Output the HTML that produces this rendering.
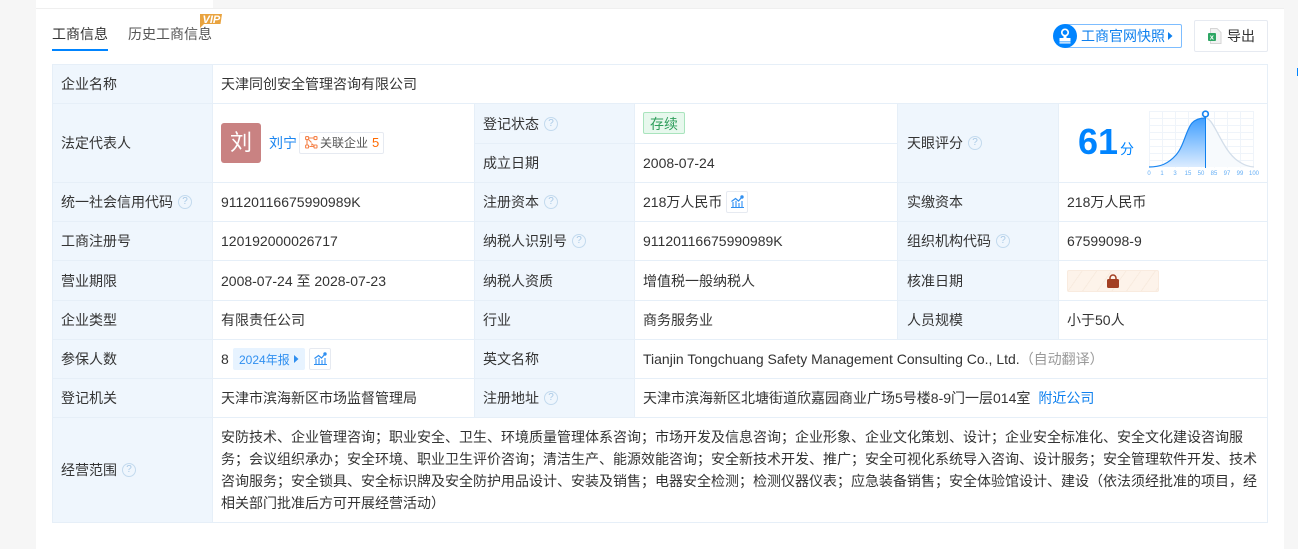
<!DOCTYPE html>
<html lang="zh"><head><meta charset="utf-8"><title>工商信息</title>
<style>
html,body{margin:0;padding:0;width:1298px;height:549px;overflow:hidden;background:#f6f6f6}
body{position:relative;font:14px/20px "Liberation Sans","Noto Sans CJK SC",sans-serif;color:#333}
.a{position:absolute;white-space:nowrap}
.bg{position:absolute;background:#eff6fd}
.h{position:absolute;height:1px;background:#e6eff8;left:52px;width:1216px}
.v{position:absolute;width:1px;background:#e6eff8}
.q{display:inline-block;width:12px;height:12px;border:1px solid #c3daee;border-radius:50%;color:#a9c9e6;font:10px/12px "Liberation Sans",sans-serif;text-align:center;margin-left:5px;vertical-align:3px}
.ic{position:absolute;width:20px;height:20px;border:1px solid #e6eaf1;border-radius:2px;background:#fff}
</style></head><body>
<div class="a" style="left:36px;top:8px;width:1248px;height:541px;background:#fff;border-top:1px solid #efefef;box-sizing:border-box"></div>
<div class="a" style="left:36px;top:0;width:177px;height:8px;background:#fff"></div>
<div class="a" style="left:1297px;top:68px;width:1px;height:8px;background:#0084ff"></div>

<div class="a" style="left:52px;top:24px;color:#333">工商信息</div>
<div class="a" style="left:52px;top:49px;width:56px;height:2px;background:#0084ff"></div>
<div class="a" style="left:128px;top:24px;color:#555">历史工商信息</div>
<svg class="a" style="left:198px;top:14px" width="25" height="14"><path d="M2 0H24L22.500 10H6L2 14Z" fill="#e9a33f"/><text x="4.500" y="9" font-family="Liberation Sans" font-size="11" font-weight="700" font-style="italic" fill="#fff">VIP</text></svg>

<div class="a" style="left:1064px;top:24px;width:116px;height:22px;border:1px solid #7dbdff;border-radius:2px;background:#fff"></div>
<svg class="a" style="left:1053px;top:24px" width="24" height="24"><circle cx="12" cy="12" r="12" fill="#0084ff"/><circle cx="12" cy="8.500" r="3.200" fill="none" stroke="#fff" stroke-width="1.700"/><path d="M10.500 11.500h3v2.500h4v3.500H6.500V14h4zM6.500 18.300h11v1.200h-11z" fill="#fff"/></svg>
<div class="a" style="left:1081px;top:26px;color:#0f80ee">工商官网快照</div>
<svg class="a" style="left:1168px;top:32px" width="5" height="8"><path d="M0 0L4.500 4L0 8Z" fill="#0f80ee"/></svg>

<div class="a" style="left:1194px;top:20px;width:72px;height:30px;border:1px solid #e6eaf1;border-radius:2px;background:#fff"></div>
<svg class="a" style="left:1208px;top:28px" width="14" height="16"><path d="M2.500 .5H9L13 4.500V15.500H2.500Z" fill="#f2f2f2" stroke="#d5d5d5"/><rect x="0" y="5" width="8" height="8" rx="1" fill="#2ea664"/><text x="1.800" y="11.500" font-family="Liberation Sans" font-size="7.500" font-weight="700" fill="#fff">x</text></svg>
<div class="a" style="left:1227px;top:26px">导出</div>

<!-- table -->
<div class="bg" style="left:53px;top:65px;width:159px;height:457px"></div>
<div class="bg" style="left:475px;top:104px;width:159px;height:313px"></div>
<div class="bg" style="left:898px;top:104px;width:160px;height:235px"></div>
<div class="h" style="top:64px"></div><div class="h" style="top:103px"></div>
<div class="h" style="top:182px"></div><div class="h" style="top:221px"></div>
<div class="h" style="top:260px"></div><div class="h" style="top:300px"></div>
<div class="h" style="top:339px"></div><div class="h" style="top:378px"></div>
<div class="h" style="top:417px"></div><div class="h" style="top:522px"></div>
<div class="h" style="top:143px;left:475px;width:423px"></div>
<div class="v" style="left:52px;top:64px;height:459px"></div>
<div class="v" style="left:212px;top:64px;height:459px"></div>
<div class="v" style="left:1267px;top:64px;height:459px"></div>
<div class="v" style="left:474px;top:103px;height:315px"></div>
<div class="v" style="left:634px;top:103px;height:315px"></div>
<div class="v" style="left:897px;top:103px;height:237px"></div>
<div class="v" style="left:1058px;top:103px;height:237px"></div>

<div class="a" style="left:61px;top:74px">企业名称</div>
<div class="a" style="left:221px;top:74px">天津同创安全管理咨询有限公司</div>

<div class="a" style="left:61px;top:133px">法定代表人</div>
<div class="a" style="left:221px;top:123px;width:40px;height:40px;border-radius:3px;background:#c98282;color:#fff;font-size:22px;line-height:40px;text-align:center">刘</div>
<div class="a" style="left:269px;top:133px;color:#1a85f0">刘宁</div>
<div class="a" style="left:299px;top:132px;width:83px;height:20px;border:1px solid #e6eaf1;border-radius:2px;background:#fff"></div>
<svg class="a" style="left:305px;top:136px" width="13" height="13" fill="none" stroke="#f5834a" stroke-width="1.100"><rect x=".6" y=".6" width="3" height="3" rx=".8"/><rect x="9" y=".6" width="3" height="3" rx=".8"/><rect x=".6" y="9" width="3" height="3" rx=".8"/><rect x="9" y="9" width="3" height="3" rx=".8"/><path d="M3.600 2H9M2 3.600V9M3.600 3.600L6.500 6.500M4.500 10.500H9M6.500 7.500L9 9.500M6 9H7.500"/></svg>
<div class="a" style="left:320px;top:133px;font-size:12px;color:#555">关联企业</div>
<div class="a" style="left:372px;top:133px;font-size:13px;color:#ff6a00">5</div>

<div class="a" style="left:483px;top:114px">登记状态<span class="q">?</span></div>
<div class="a" style="left:643px;top:112px;width:40px;height:20px;border:1px solid #a9e4bd;border-radius:2px;background:#e7f8ed;color:#2f9e5c;text-align:center;line-height:22px">存续</div>
<div class="a" style="left:483px;top:153px">成立日期</div>
<div class="a" style="left:643px;top:153px">2008-07-24</div>

<div class="a" style="left:907px;top:133px">天眼评分<span class="q">?</span></div>
<div class="a" style="left:1078px;top:121px;font:700 36px/42px 'Liberation Sans',sans-serif;color:#0084ff">61</div>
<div class="a" style="left:1120px;top:139px;color:#0084ff">分</div>
<svg class="a" style="left:1146px;top:108px" width="114" height="70">
<g stroke="#eff4fa" stroke-width="1" fill="none"><path d="M3.500 3.500V59.500M16.500 3.500V59.500M29.500 3.500V59.500M42.500 3.500V59.500M55.500 3.500V59.500M68.500 3.500V59.500M81.500 3.500V59.500M94.500 3.500V59.500M107.500 3.500V59.500M3 3.500H108M3 10.500H108M3 17.500H108M3 24.500H108M3 31.500H108M3 38.500H108M3 45.500H108M3 52.500H108"/></g>
<defs><linearGradient id="g" x1="0" y1="0" x2="0" y2="1"><stop offset="0" stop-color="#3f9eff"/><stop offset="1" stop-color="#dcecff"/></linearGradient></defs>
<path d="M59 10C64 10 67 17 70 22C76 33 82 46 92 53C98 57 102 58.500 108 59H59Z" fill="#f7fafd"/>
<path d="M3 59C14 59 22 56 30 47C38 38 40 22 46 15C50 11 55 10 59 10V59Z" fill="url(#g)"/>
<path d="M59 10C64 10 67 17 70 22C76 33 82 46 92 53C98 57 102 58.500 108 59" fill="none" stroke="#d3deea" stroke-width="1.300"/>
<path d="M3 59C14 59 22 56 30 47C38 38 40 22 46 15C50 11 55 10 59 10" fill="none" stroke="#1a85f0" stroke-width="1.200"/>
<path d="M59.500 7V60" stroke="#0f80ee" stroke-width="1"/>
<circle cx="59.500" cy="6" r="2.800" fill="#fff" stroke="#1a85f0" stroke-width="1.700"/>
<g font-family="Liberation Sans" font-size="6" fill="#64aef5" text-anchor="middle"><text x="3" y="67">0</text><text x="16" y="67">1</text><text x="29" y="67">3</text><text x="42" y="67">15</text><text x="55" y="67">50</text><text x="68" y="67">85</text><text x="81" y="67">97</text><text x="94" y="67">99</text><text x="108" y="67">100</text></g>
</svg>

<div class="a" style="left:61px;top:192px">统一社会信用代码<span class="q">?</span></div>
<div class="a" style="left:221px;top:192px">91120116675990989K</div>
<div class="a" style="left:483px;top:192px">注册资本<span class="q">?</span></div>
<div class="a" style="left:643px;top:192px">218万人民币</div>
<div class="ic" style="left:726px;top:191px"></div>
<svg class="a" style="left:731px;top:195px" width="13" height="13"><path d="M1 7h2v5H1zM4 6h2v6H4zM7 8h2v4H7zM10 6h2v6h-2z" fill="#8cc2fb"/><path d="M.5 6.500L4.500 3.500L7.500 6L11 2" fill="none" stroke="#2f8ff0" stroke-width="1.200"/><circle cx="11" cy="2" r="1.700" fill="#2f8ff0"/><path d="M0 12.500H13" stroke="#2f8ff0"/></svg>
<div class="a" style="left:907px;top:192px">实缴资本</div>
<div class="a" style="left:1067px;top:192px">218万人民币</div>

<div class="a" style="left:61px;top:231px">工商注册号</div>
<div class="a" style="left:221px;top:231px">120192000026717</div>
<div class="a" style="left:483px;top:231px">纳税人识别号<span class="q">?</span></div>
<div class="a" style="left:643px;top:231px">91120116675990989K</div>
<div class="a" style="left:907px;top:231px">组织机构代码<span class="q">?</span></div>
<div class="a" style="left:1067px;top:231px">67599098-9</div>

<div class="a" style="left:61px;top:271px">营业期限</div>
<div class="a" style="left:221px;top:271px">2008-07-24 至 2028-07-23</div>
<div class="a" style="left:483px;top:271px">纳税人资质</div>
<div class="a" style="left:643px;top:271px">增值税一般纳税人</div>
<div class="a" style="left:907px;top:271px">核准日期</div>
<div class="a" style="left:1067px;top:270px;width:90px;height:20px;border:1px solid #f9ebdf;border-radius:2px;background:repeating-linear-gradient(125deg,#fdf3ea 0 11px,#f8ebdf 11px 12px)"></div>
<svg class="a" style="left:1107px;top:274px" width="12" height="14"><path d="M3 6V4a3 3 0 0 1 6 0V6" fill="none" stroke="#a33f22" stroke-width="1.500"/><rect y="5" width="12" height="9" rx="1.500" fill="#a33f22"/></svg>

<div class="a" style="left:61px;top:310px">企业类型</div>
<div class="a" style="left:221px;top:310px">有限责任公司</div>
<div class="a" style="left:483px;top:310px">行业</div>
<div class="a" style="left:643px;top:310px">商务服务业</div>
<div class="a" style="left:907px;top:310px">人员规模</div>
<div class="a" style="left:1067px;top:310px">小于50人</div>

<div class="a" style="left:61px;top:349px">参保人数</div>
<div class="a" style="left:221px;top:349px">8</div>
<div class="a" style="left:233px;top:348px;width:72px;height:22px;border-radius:2px;background:#e7f3ff"></div>
<div class="a" style="left:239px;top:350px;font-size:12px;color:#2f8ff0">2024年报</div>
<svg class="a" style="left:294px;top:355px" width="5" height="8"><path d="M0 0L4.500 4L0 8Z" fill="#2f8ff0"/></svg>
<div class="ic" style="left:309px;top:348px"></div>
<svg class="a" style="left:314px;top:352px" width="13" height="13"><path d="M1 7h2v5H1zM4 6h2v6H4zM7 8h2v4H7zM10 6h2v6h-2z" fill="#8cc2fb"/><path d="M.5 6.500L4.500 3.500L7.500 6L11 2" fill="none" stroke="#2f8ff0" stroke-width="1.200"/><circle cx="11" cy="2" r="1.700" fill="#2f8ff0"/><path d="M0 12.500H13" stroke="#2f8ff0"/></svg>
<div class="a" style="left:483px;top:349px">英文名称</div>
<div class="a" style="left:643px;top:349px">Tianjin Tongchuang Safety Management Consulting Co., Ltd.<span style="color:#999">（自动翻译）</span></div>

<div class="a" style="left:61px;top:388px">登记机关</div>
<div class="a" style="left:221px;top:388px">天津市滨海新区市场监督管理局</div>
<div class="a" style="left:483px;top:388px">注册地址<span class="q">?</span></div>
<div class="a" style="left:643px;top:388px">天津市滨海新区北塘街道欣嘉园商业广场5号楼8-9门一层014室<span style="color:#0f80ee;margin-left:8px">附近公司</span></div>

<div class="a" style="left:61px;top:460px">经营范围<span class="q">?</span></div>
<div class="a" style="left:221px;top:426px;line-height:22px">安防技术、企业管理咨询；职业安全、卫生、环境质量管理体系咨询；市场开发及信息咨询；企业形象、企业文化策划、设计；企业安全标准化、安全文化建设咨询服<br>务；会议组织承办；安全环境、职业卫生评价咨询；清洁生产、能源效能咨询；安全新技术开发、推广；安全可视化系统导入咨询、设计服务；安全管理软件开发、技术<br>咨询服务；安全锁具、安全标识牌及安全防护用品设计、安装及销售；电器安全检测；检测仪器仪表；应急装备销售；安全体验馆设计、建设（依法须经批准的项目，经<br>相关部门批准后方可开展经营活动）</div>
</body></html>
